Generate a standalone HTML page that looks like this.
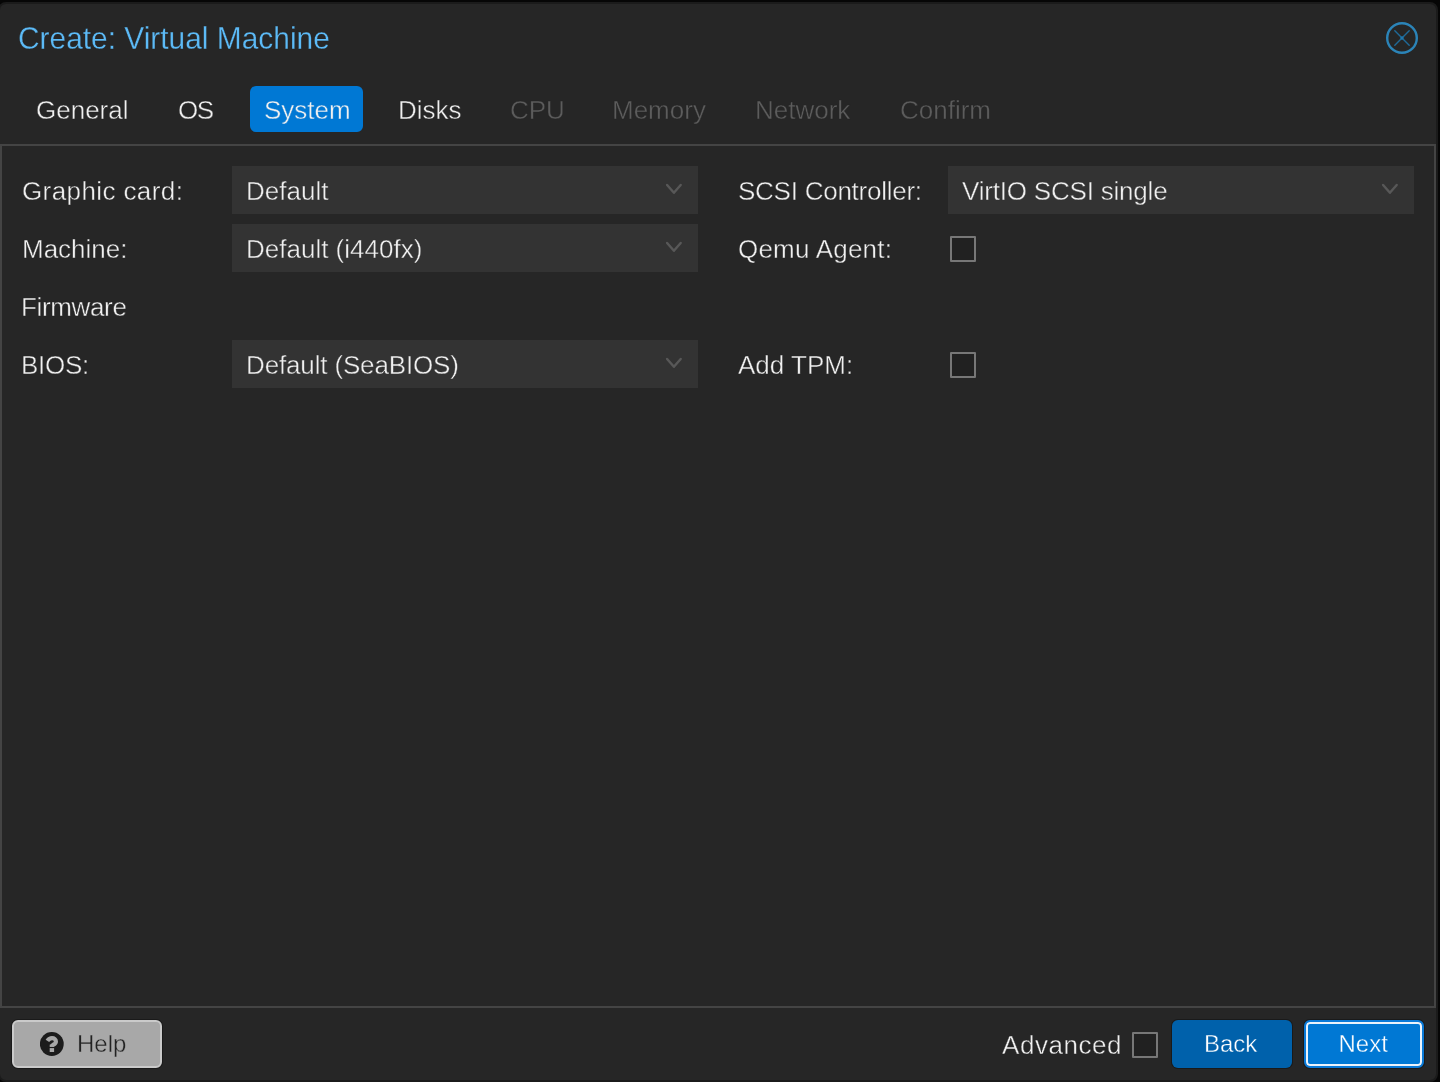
<!DOCTYPE html>
<html><head><meta charset="utf-8">
<style>
html,body{margin:0;padding:0;width:1440px;height:1082px;overflow:hidden;background:#060606;}
body{position:relative;font-family:"Liberation Sans",sans-serif;-webkit-font-smoothing:antialiased;-webkit-text-stroke:0.4px #262626;}
.win{position:absolute;left:-2px;top:2px;width:1436px;height:1076px;border:2px solid #1b1b1b;border-radius:8px;background:#262626;}
.a{position:absolute;white-space:nowrap;line-height:30px;font-size:26px;color:#f0f0f0;}
.title{position:absolute;left:18px;top:20.5px;font-size:32px;line-height:34px;color:#5cbaf6;white-space:nowrap;transform:scaleX(0.934);-webkit-text-stroke:0.3px #262626;transform-origin:0 0;}
.tab{position:absolute;top:95px;font-size:26px;line-height:30px;color:#f0f0f0;white-space:nowrap;}
.tab.dis{color:#5c5c5c;}
.tabact{position:absolute;left:250px;top:86px;width:113px;height:46px;border-radius:6px;background:#0078d4;}
.panel{position:absolute;left:0;top:144px;width:1432px;height:860px;border:2px solid #444;background:#262626;}
.field{position:absolute;height:48px;background:#333;}
.field .v{position:absolute;left:14px;top:10px;font-size:26px;line-height:30px;color:#f0f0f0;white-space:nowrap;-webkit-text-stroke:0.4px #333;}
.chev{position:absolute;right:15px;top:17px;width:18px;height:12px;}
.cb{position:absolute;width:22px;height:22px;border:2px solid #777;border-radius:1px;background:#212121;}
.btn{position:absolute;top:1020px;height:48px;border-radius:6px;box-sizing:border-box;}
</style></head><body><div id="root" style="position:absolute;left:0;top:0;width:1440px;height:1082px;will-change:transform">
<div class="win"></div>
<div class="title">Create: Virtual Machine</div>
<svg style="position:absolute;left:1384px;top:20px" width="36" height="36" viewBox="0 0 36 36">
<circle cx="18" cy="18" r="14.8" fill="none" stroke="#2b84b8" stroke-width="2.4"/>
<path d="M10.8 10.8 L25.2 25.2 M25.2 10.8 L10.8 25.2" stroke="#1f6a98" stroke-width="1.4" stroke-linecap="round"/><circle cx="18" cy="18" r="1.7" fill="#1f78ae"/>
</svg>
<div class="tabact"></div>
<div class="tab" style="left:36px">General</div>
<div class="tab" style="left:178px;letter-spacing:-1.5px">OS</div>
<div class="tab" style="left:264px;-webkit-text-stroke:0.4px #0078d4">System</div>
<div class="tab" style="left:398px">Disks</div>
<div class="tab dis" style="left:510px">CPU</div>
<div class="tab dis" style="left:612px">Memory</div>
<div class="tab dis" style="left:755px">Network</div>
<div class="tab dis" style="left:900px">Confirm</div>
<div class="panel"></div>

<div class="a" style="left:22px;top:176px;letter-spacing:0.4px">Graphic card:</div>
<div class="a" style="left:22px;top:234px">Machine:</div>
<div class="a" style="left:21px;top:292px;letter-spacing:-0.35px">Firmware</div>
<div class="a" style="left:21px;top:350px;letter-spacing:-0.3px">BIOS:</div>

<div class="field" style="left:232px;top:166px;width:466px"><div class="v">Default</div>
<svg class="chev" viewBox="0 0 18 12"><path d="M2.1 2 L8.9 9.8 L15.7 2" fill="none" stroke="#585858" stroke-width="2.4" stroke-linecap="round" stroke-linejoin="round"/></svg></div>
<div class="field" style="left:232px;top:224px;width:466px"><div class="v">Default (i440fx)</div>
<svg class="chev" viewBox="0 0 18 12"><path d="M2.1 2 L8.9 9.8 L15.7 2" fill="none" stroke="#585858" stroke-width="2.4" stroke-linecap="round" stroke-linejoin="round"/></svg></div>
<div class="field" style="left:232px;top:340px;width:466px"><div class="v" style="letter-spacing:-0.15px">Default (SeaBIOS)</div>
<svg class="chev" viewBox="0 0 18 12"><path d="M2.1 2 L8.9 9.8 L15.7 2" fill="none" stroke="#585858" stroke-width="2.4" stroke-linecap="round" stroke-linejoin="round"/></svg></div>

<div class="a" style="left:738px;top:176px;letter-spacing:-0.25px">SCSI Controller:</div>
<div class="a" style="left:738px;top:234px;letter-spacing:0.22px">Qemu Agent:</div>
<div class="a" style="left:738px;top:350px">Add TPM:</div>
<div class="field" style="left:948px;top:166px;width:466px"><div class="v" style="letter-spacing:-0.2px">VirtIO SCSI single</div>
<svg class="chev" viewBox="0 0 18 12"><path d="M2.1 2 L8.9 9.8 L15.7 2" fill="none" stroke="#585858" stroke-width="2.4" stroke-linecap="round" stroke-linejoin="round"/></svg></div>
<div class="cb" style="left:950px;top:236px"></div>
<div class="cb" style="left:950px;top:352px"></div>

<div class="btn" style="left:12px;width:150px;background:#a8a8a8;border:2px solid #cacaca;box-shadow:0 0 0 1px #1a1a1a"></div>
<svg style="position:absolute;left:40px;top:1032px" width="24" height="24" viewBox="0 0 24 24">
<circle cx="11.8" cy="12" r="11.9" fill="#1c1c1c"/>
<path d="M7.4 8.9 C8.6 7.1 10.1 6.1 12.0 6.1 C14.2 6.1 15.9 7.5 15.9 9.4 C15.9 11.2 14.7 11.9 13.5 12.6 C12.4 13.3 11.9 13.8 11.9 14.8" fill="none" stroke="#a8a8a8" stroke-width="4.2"/>
<rect x="9.7" y="12.6" width="4.4" height="2.2" fill="#a8a8a8"/>
<rect x="9.7" y="16.1" width="4.4" height="3.9" fill="#a8a8a8"/>
</svg>
<div class="a" style="left:77px;top:1029px;color:#222;font-size:24px;-webkit-text-stroke:0.4px #a8a8a8">Help</div>

<div class="a" style="left:1002px;top:1030px;letter-spacing:0.55px">Advanced</div>
<div class="cb" style="left:1132px;top:1032px"></div>
<div class="btn" style="left:1172px;width:120px;background:#0061ab;box-shadow:0 0 0 1px #1a1a1a"></div>
<div class="a" style="left:1204px;top:1029px;color:#fff;font-size:24px;-webkit-text-stroke:0.4px #0061ab">Back</div>
<div class="btn" style="left:1304px;width:120px;background:#0078d4;border:2px solid #0a7ad8;box-shadow:inset 0 0 0 2px #ebf3fb, 0 0 0 1px #1a1a1a"></div>
<div class="a" style="left:1338.5px;top:1029px;color:#fff;font-size:24px;-webkit-text-stroke:0.4px #0078d4">Next</div>
</div></body></html>
